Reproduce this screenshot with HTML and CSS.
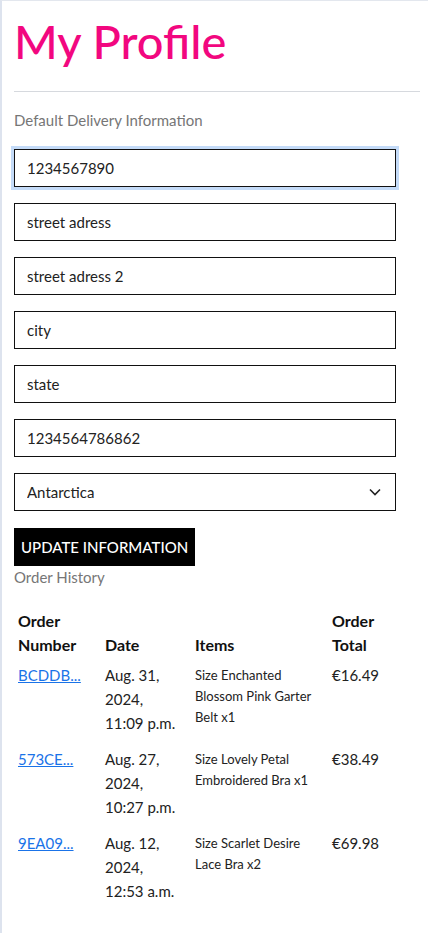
FILE: index.html
```html
<!DOCTYPE html>
<html lang="en">
<head>
<meta charset="utf-8">
<title>My Profile</title>
<link rel="stylesheet" href="styles.css">
</head>
<body>
<div class="page">
  <main class="profile">
    <h1 class="title">My Profile</h1>
    <hr class="divider">
    <p class="section-label">Default Delivery Information</p>
    <form class="delivery-form">
      <input class="field field-focus" type="text" value="1234567890">
      <input class="field" type="text" value="street adress">
      <input class="field" type="text" value="street adress 2">
      <input class="field" type="text" value="city">
      <input class="field" type="text" value="state">
      <input class="field" type="text" value="1234564786862">
      <div class="select-wrap">
        <select class="field select">
          <option>Antarctica</option>
        </select>
        <svg class="chevron" width="12" height="8" viewBox="0 0 12 8"><path d="M1 1.5l5 5 5-5" fill="none" stroke="#222" stroke-width="1.6"/></svg>
      </div>
      <button class="btn" type="button">UPDATE INFORMATION</button>
    </form>
    <p class="section-label history-label">Order History</p>
    <table class="orders">
      <thead>
        <tr>
          <th class="c-num">Order Number</th>
          <th class="c-date">Date</th>
          <th class="c-items">Items</th>
          <th class="c-total">Order Total</th>
        </tr>
      </thead>
      <tbody>
        <tr>
          <td class="c-num"><a href="#" class="order-link">BCDDB...</a></td>
          <td class="c-date">Aug. 31, 2024, <span class="nowrap">11:09 p.m.</span></td>
          <td class="c-items">Size Enchanted Blossom Pink Garter Belt x1</td>
          <td class="c-total">€16.49</td>
        </tr>
        <tr>
          <td class="c-num"><a href="#" class="order-link">573CE...</a></td>
          <td class="c-date">Aug. 27, 2024, <span class="nowrap">10:27 p.m.</span></td>
          <td class="c-items">Size Lovely Petal Embroidered Bra x1</td>
          <td class="c-total">€38.49</td>
        </tr>
        <tr>
          <td class="c-num"><a href="#" class="order-link">9EA09...</a></td>
          <td class="c-date">Aug. 12, 2024, <span class="nowrap">12:53 a.m.</span></td>
          <td class="c-items">Size Scarlet Desire Lace Bra x2</td>
          <td class="c-total">€69.98</td>
        </tr>
      </tbody>
    </table>
  </main>
</div>
</body>
</html>
```
FILE: styles.css
```css
* { box-sizing: border-box; }
html, body { margin: 0; padding: 0; background: #fff; }
body {
  font-family: "Lato", "Noto Sans", sans-serif;
  color: #222;
}
.page {
  min-height: 933px;
  border-top: 1px solid #e3e7ee;
  border-left: 2px solid #dde3ee;
  padding: 0 8px 40px 12px;
}
.profile { display: flex; flex-direction: column; }
.title {
  margin: 12px 0 0;
  font-size: 47px;
  font-weight: 500;
  line-height: 56px;
  color: #f2077f;
}
.divider {
  margin: 22px 0 0;
  border: 0;
  border-top: 1px solid #d6d9de;
  width: 406px;
}
.section-label {
  margin: 18px 0 0;
  font-size: 15px;
  line-height: 20px;
  color: #767676;
}
.delivery-form {
  display: flex;
  flex-direction: column;
  align-items: flex-start;
  gap: 16px;
  margin-top: 19px;
}
.field {
  width: 382px;
  height: 38px;
  border: 1px solid #111;
  border-radius: 0;
  padding: 0 12px;
  font-family: inherit;
  font-size: 15px;
  color: #222;
  background: #fff;
  outline: none;
}
.field-focus { box-shadow: 0 0 0 3px #c4dbf8; }
.select-wrap { position: relative; width: 382px; }
.select { appearance: none; -webkit-appearance: none; display: block; }
.chevron { position: absolute; right: 15px; top: 15px; pointer-events: none; }
.btn {
  margin-top: 1px;
  height: 38px;
  padding: 0 7px;
  background: #000;
  color: #fff;
  border: 0;
  font-family: inherit;
  font-size: 15px;
  font-weight: 500;
}
.history-label { margin-top: 1px; }
.orders {
  margin-top: 22px;
  width: 382px;
  border-collapse: collapse;
  table-layout: fixed;
}
.orders th {
  text-align: left;
  vertical-align: bottom;
  font-size: 16px;
  font-weight: 700;
  line-height: 24px;
  padding: 0 4px 2px;
  color: #111;
}
.orders td {
  vertical-align: top;
  padding: 4px 4px 8px;
  font-size: 15px;
  line-height: 24px;
  color: #222;
}
.c-num { width: 87px; }
.c-date { width: 90px; }
.c-items { width: 137px; }
.c-total { width: 68px; }
.nowrap { white-space: nowrap; }
.orders td.c-num { white-space: nowrap; }
.orders td.c-items { font-size: 13px; line-height: 21px; padding-top: 6px; }
.order-link { color: #1a73e8; text-decoration: underline; }
```
